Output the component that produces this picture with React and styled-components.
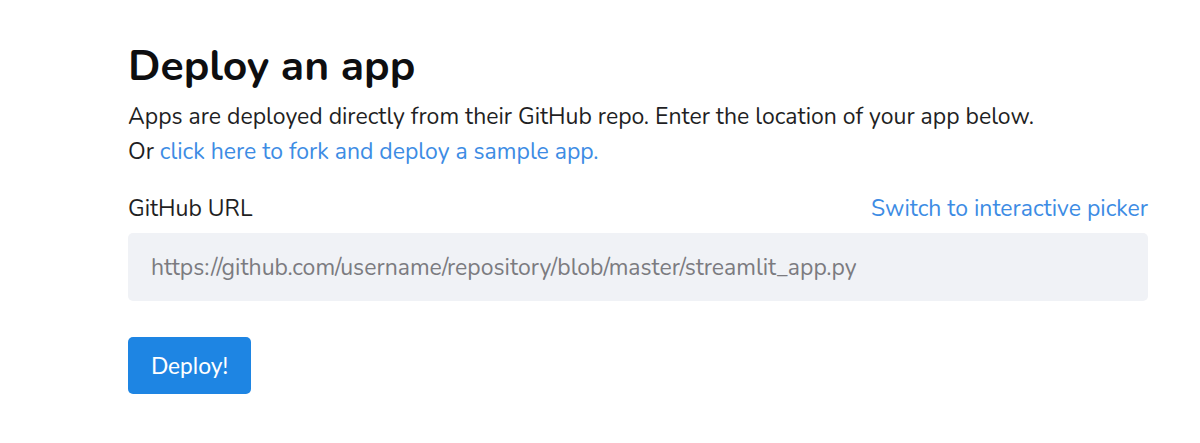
import React from 'react'
import styled, { createGlobalStyle } from 'styled-components'

const GlobalStyle = createGlobalStyle`
    body {
        margin: 0;
        background: #ffffff;
        font-family: "Nunito", Lato, "Open Sans", sans-serif;
        color: #262730;
    }
`

const App = () => {
    return (
        <>
            <GlobalStyle />
            <Page>
                <Title>Deploy an app</Title>
                <Text>Apps are deployed directly from their GitHub repo. Enter the location of your app below.</Text>
                <Text>Or <Link href="#">click here to fork and deploy a sample app.</Link></Text>
                <Field>
                    <LabelRow>
                        <Label>GitHub URL</Label>
                        <Link href="#">Switch to interactive picker</Link>
                    </LabelRow>
                    <Input placeholder="https://github.com/username/repository/blob/master/streamlit_app.py" />
                </Field>
                <Button>Deploy!</Button>
            </Page>
        </>
    )
}

export default App


const Page = styled.div`
    width: 1020px;
    padding: 38px 0 0 128px;
    display: flex;
    flex-direction: column;
    align-items: flex-start;
`

const Title = styled.h1`
    font-size: 42.7px;
    font-weight: 700;
    color: #0e0e10;
    margin: 0 0 5px;
    line-height: 56px;
`

const Text = styled.p`
    font-size: 23px;
    line-height: 35px;
    margin: 0;
    color: #1f1f24;
`

const Link = styled.a`
    color: #3d8ce4;
    text-decoration: none;
`

const Field = styled.div`
    width: 100%;
    margin-top: 25px;
    display: flex;
    flex-direction: column;
    gap: 9px;
`

const LabelRow = styled.div`
    display: flex;
    justify-content: space-between;
    align-items: center;
    font-size: 23px;
    line-height: 30px;
`

const Label = styled.span`
    color: #1f1f24;
`

const Input = styled.input`
    box-sizing: border-box;
    width: 100%;
    height: 68px;
    border: none;
    border-radius: 5px;
    background: #f0f2f6;
    padding: 0 23px;
    font-family: inherit;
    font-size: 23px;
    outline: none;
    &::placeholder {
        color: #7b7b80;
    }
`

const Button = styled.button`
    margin-top: 36px;
    height: 57px;
    padding: 0 23px;
    border: none;
    border-radius: 5px;
    background: #1e85e3;
    color: #ffffff;
    font-family: Lato, sans-serif;
    font-size: 22.7px;
    cursor: pointer;
`
